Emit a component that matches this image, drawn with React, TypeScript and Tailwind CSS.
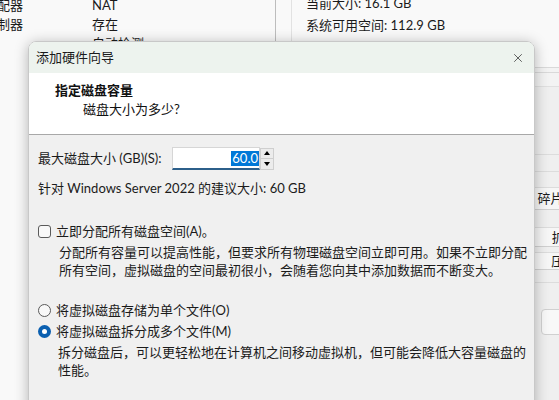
import { X } from 'lucide-react';

const font = { fontFamily: 'Lato, "Noto Sans CJK SC", sans-serif' };

function BackWindow() {
  return (
    <div className="flex h-full w-full bg-[#f9f9f9] text-[13px] leading-[19px] text-[#1b1b1b]">
      {/* left list column */}
      <div className="w-[276px] shrink-0 border-r border-[#bdbdbd] -mt-[4px]">
        <div className="flex h-[19px] items-center">
          <span className="-ml-[16px] w-[108px]">适配器</span>
          <span>NAT</span>
        </div>
        <div className="flex h-[19px] items-center">
          <span className="-ml-[16px] w-[108px]">控制器</span>
          <span>存在</span>
        </div>
        <div className="flex h-[19px] items-center">
          <span className="w-[92px]" />
          <span>自动检测</span>
        </div>
      </div>
      <div className="w-[16px] shrink-0 border-r border-[#e2e2e2]" />
      {/* right details panel */}
      <div className="flex flex-1 flex-col">
        <div className="h-[76px] border-b border-[#d9d9d9] pl-[14px] -mt-[8px]">
          <div className="h-[22px] leading-[22px]">当前大小: 16.1 GB</div>
          <div className="h-[22px] leading-[22px]">系统可用空间: 112.9 GB</div>
        </div>
        <div className="h-[5px] border-b border-[#d9d9d9] bg-[#f3f3f3]" />
        <div className="h-[14px] border-b border-[#e0e0e0] bg-[#f3f3f3]" />
        <div className="flex flex-1 flex-col bg-[#efefef]">
          <div className="h-[68px] border-b border-[#dcdcdc]" />
          <div className="h-[17px] border-b border-[#dcdcdc]" />
          <div className="ml-[238px] flex w-[84px] flex-col">
            <div className="h-[16px] border-b border-[#dcdcdc]" />
            <div className="flex h-[22px] items-center justify-center border-b border-[#d0d0d0] bg-[#f6f6f6]">碎片整理(D)</div>
            <div className="h-[18px] border-b border-[#dcdcdc]" />
            <div className="flex h-[19px] items-center justify-center border-b border-[#d0d0d0] bg-[#f6f6f6]">扩展(E)</div>
            <div className="h-[6px] border-b border-[#dcdcdc]" />
            <div className="flex h-[17px] items-center justify-center border-b border-[#d0d0d0] bg-[#f6f6f6]">压缩(C)</div>
            <div className="h-[13px] border-b border-[#dcdcdc]" />
            <div className="h-[26px]" />
            <div className="ml-[11px] h-[26px] rounded-[4px] border border-[#d0d0d0] bg-[#f8f8f8]" />
          </div>
        </div>
      </div>
    </div>
  );
}

function Spinner() {
  return (
    <div className="flex h-[22px] w-[14px] flex-col border border-[#cfcfcf] bg-[#ececec]">
      <div className="flex flex-1 items-center justify-center border-b border-[#cfcfcf]">
        <div className="h-0 w-0 border-x-[3px] border-b-[4px] border-x-transparent border-b-black" />
      </div>
      <div className="flex flex-1 items-center justify-center">
        <div className="h-0 w-0 border-x-[3px] border-t-[4px] border-x-transparent border-t-black" />
      </div>
    </div>
  );
}

function Dialog() {
  return (
    <div className="absolute left-[28px] top-[41px] flex h-[380px] w-[507px] flex-col overflow-hidden rounded-t-[8px] border border-[#c8c8c8] shadow-[0_2px_14px_rgba(0,0,0,0.28)]">
      {/* title bar */}
      <div className="flex h-[31px] shrink-0 items-center justify-between bg-[#edf3ee] pl-[7px] pr-[9px] text-[13px] text-[#1b1b1b]">
        <span>添加硬件向导</span>
        <X size={14} strokeWidth={1.2} className="text-[#222]" />
      </div>
      {/* header */}
      <div className="h-[62px] shrink-0 border-b border-[#a8a8a8] bg-white pl-[26px] pt-[8px] text-[13px] leading-[18px] text-[#111]">
        <div className="font-bold">指定磁盘容量</div>
        <div className="pl-[28px] pt-[1px]">磁盘大小为多少?</div>
      </div>
      {/* body */}
      <div className="flex flex-1 flex-col bg-[#f0f0f0] pl-[9px] pr-[6px] pt-[12px] text-[13px] leading-[17px] text-[#1b1b1b]">
        <div className="flex items-center">
          <span className="w-[134px]">最大磁盘大小 (GB)(S):</span>
          <div className="flex h-[23px] w-[88px] items-center justify-end border border-[#d6d6d6] border-b-[2px] border-b-[#2c5f8a] bg-white">
            <span className="bg-[#0078d7] px-[1px] leading-[15px] text-white">60.0</span>
          </div>
          <Spinner />
        </div>
        <div className="mt-[10px]">针对 Windows Server 2022 的建议大小: 60 GB</div>

        <div className="mt-[26px] flex items-center gap-[5px]">
          <div className="h-[13px] w-[13px] rounded-[3px] border border-[#5a5a5a] bg-[#f8f8f8]" />
          <span>立即分配所有磁盘空间(A)。</span>
        </div>
        <div className="mt-[3px] whitespace-nowrap pl-[21px] leading-[18px]">
          分配所有容量可以提高性能，但要求所有物理磁盘空间立即可用。如果不立即分配
          <br />
          所有空间，虚拟磁盘的空间最初很小，会随着您向其中添加数据而不断变大。
        </div>

        <div className="mt-[23px] flex items-center gap-[5px]">
          <div className="h-[13px] w-[13px] rounded-full border border-[#5a5a5a] bg-[#f8f8f8]" />
          <span>将虚拟磁盘存储为单个文件(O)</span>
        </div>
        <div className="mt-[4px] flex items-center gap-[5px]">
          <div className="flex h-[13px] w-[13px] items-center justify-center rounded-full bg-[#0a5fb0]">
            <div className="h-[5px] w-[5px] rounded-full bg-white" />
          </div>
          <span>将虚拟磁盘拆分成多个文件(M)</span>
        </div>
        <div className="mt-[3px] whitespace-nowrap pl-[20px] leading-[18px]">
          拆分磁盘后，可以更轻松地在计算机之间移动虚拟机，但可能会降低大容量磁盘的
          <br />
          性能。
        </div>
      </div>
    </div>
  );
}

export default function App() {
  return (
    <div className="relative h-[400px] w-[559px] overflow-hidden" style={font}>
      <BackWindow />
      <Dialog />
    </div>
  );
}
